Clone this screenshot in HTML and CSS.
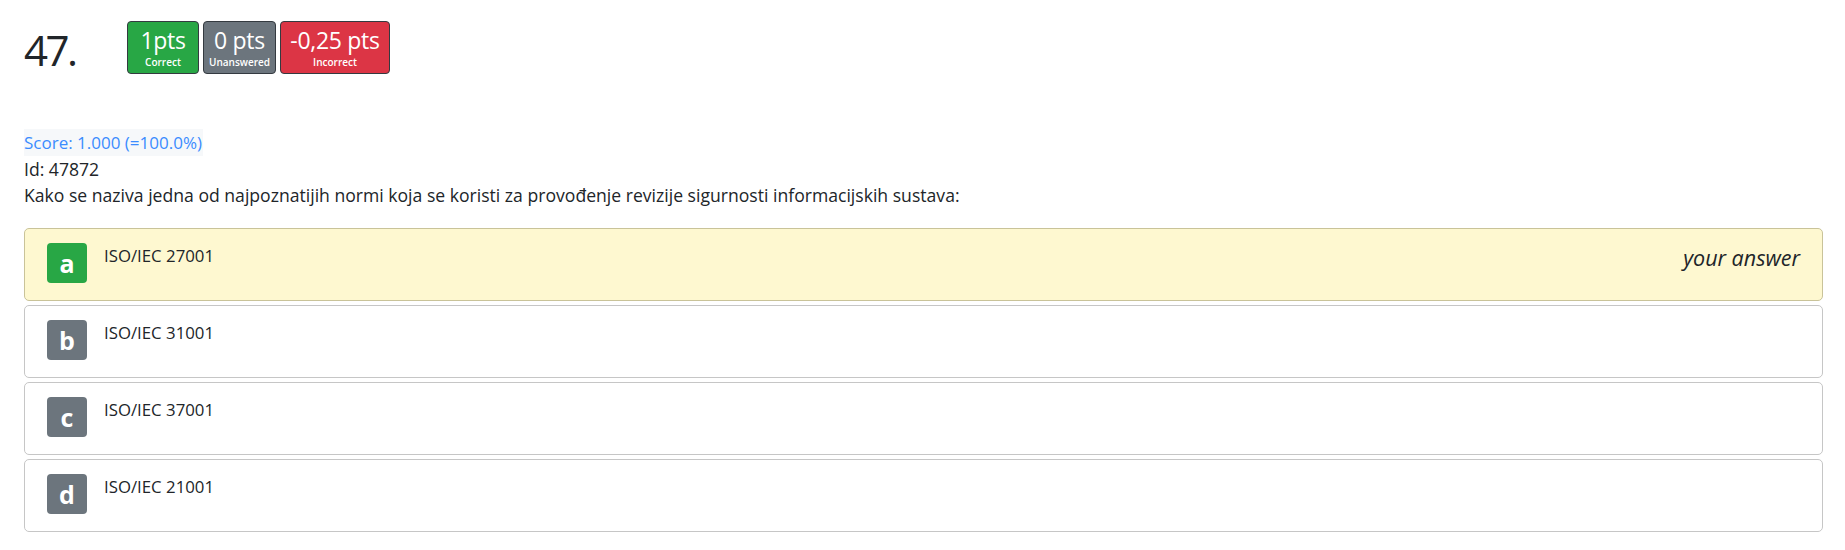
FILE: index.html
```html
<!DOCTYPE html>
<html lang="hr">
<head>
<meta charset="utf-8">
<title>Question 47</title>
<link rel="stylesheet" href="styles.css">
</head>
<body>
<div class="page">
  <div class="header">
    <div class="qnum">47.</div>
    <div class="points">
      <div class="pt pt-correct"><span class="pt-val">1pts</span><span class="pt-lbl">Correct</span></div>
      <div class="pt pt-unans"><span class="pt-val">0 pts</span><span class="pt-lbl">Unanswered</span></div>
      <div class="pt pt-wrong"><span class="pt-val">-0,25 pts</span><span class="pt-lbl">Incorrect</span></div>
    </div>
  </div>
  <div class="meta">
    <div><span class="score">Score: 1.000 (=100.0%)</span></div>
    <div>Id: 47872</div>
    <div class="question">Kako se naziva jedna od najpoznatijih normi koja se koristi za provođenje revizije sigurnosti informacijskih sustava:</div>
  </div>
  <div class="answers">
    <div class="ans ans-selected">
      <span class="letter letter-ok">a</span>
      <span class="ans-text">ISO/IEC 27001</span>
      <span class="your">your answer</span>
    </div>
    <div class="ans">
      <span class="letter">b</span>
      <span class="ans-text">ISO/IEC 31001</span>
    </div>
    <div class="ans">
      <span class="letter">c</span>
      <span class="ans-text">ISO/IEC 37001</span>
    </div>
    <div class="ans">
      <span class="letter">d</span>
      <span class="ans-text">ISO/IEC 21001</span>
    </div>
  </div>
</div>
</body>
</html>
```
FILE: styles.css
```css
html, body {
  margin: 0;
  padding: 0;
  background: #fff;
}
body {
  font-family: "Open Sans", "Noto Sans", sans-serif;
  color: #212529;
  font-size: 16px;
  line-height: 1.6;
}
.page {
  padding: 21px 22px 0 24px;
}
.header {
  display: flex;
  align-items: flex-start;
  height: 53px;
}
.qnum {
  width: 103px;
  font-size: 42px;
  letter-spacing: -2.5px;
  line-height: 53px;
  padding-top: 2px;
  color: #212529;
}
.points {
  display: flex;
  gap: 4px;
}
.pt {
  display: flex;
  flex-direction: column;
  align-items: center;
  justify-content: center;
  height: 51px;
  padding: 0 2px;
  border: 1px solid #343a40;
  border-radius: 4px;
  color: #fff;
}
.pt-correct { background: #28a745; width: 66px; }
.pt-unans { background: #6c757d; width: 67px; }
.pt-wrong { background: #dc3545; width: 104px; }
.pt-val {
  font-size: 23px;
  line-height: 29px;
  letter-spacing: -0.3px;
}
.pt-lbl {
  font-size: 10px;
  font-weight: 600;
  line-height: 14px;
  margin-bottom: 1px;
}
.meta {
  margin-top: 55px;
  line-height: 26px;
  font-size: 17.6px;
}
.score {
  display: inline-block;
  color: #3b8cff;
  background: #f6f8fa;
  font-size: 17px;
  line-height: 27px;
  padding-right: 1px;
}
.answers {
  margin-top: 20px;
  display: flex;
  flex-direction: column;
  gap: 4px;
}
.ans {
  display: flex;
  align-items: flex-start;
  box-sizing: border-box;
  height: 73px;
  padding: 14px 22px 0 22px;
  border: 1px solid #c6c6c6;
  border-radius: 5px;
  background: #fff;
}
.ans-selected {
  background: #fef8d0;
  border-color: #c9c399;
}
.letter {
  flex: none;
  width: 40px;
  height: 40px;
  border-radius: 4px;
  background: #6c757d;
  color: #fff;
  font-weight: 700;
  font-size: 25px;
  line-height: 40px;
  text-align: center;
}
.letter-ok { background: #28a745; }
.ans-text {
  margin-left: 17px;
  font-size: 16.8px;
  line-height: 26px;
  margin-top: 0;
}
.your {
  margin-left: auto;
  font-style: italic;
  font-size: 21.5px;
  line-height: 26px;
  margin-top: 2px;
}
```
